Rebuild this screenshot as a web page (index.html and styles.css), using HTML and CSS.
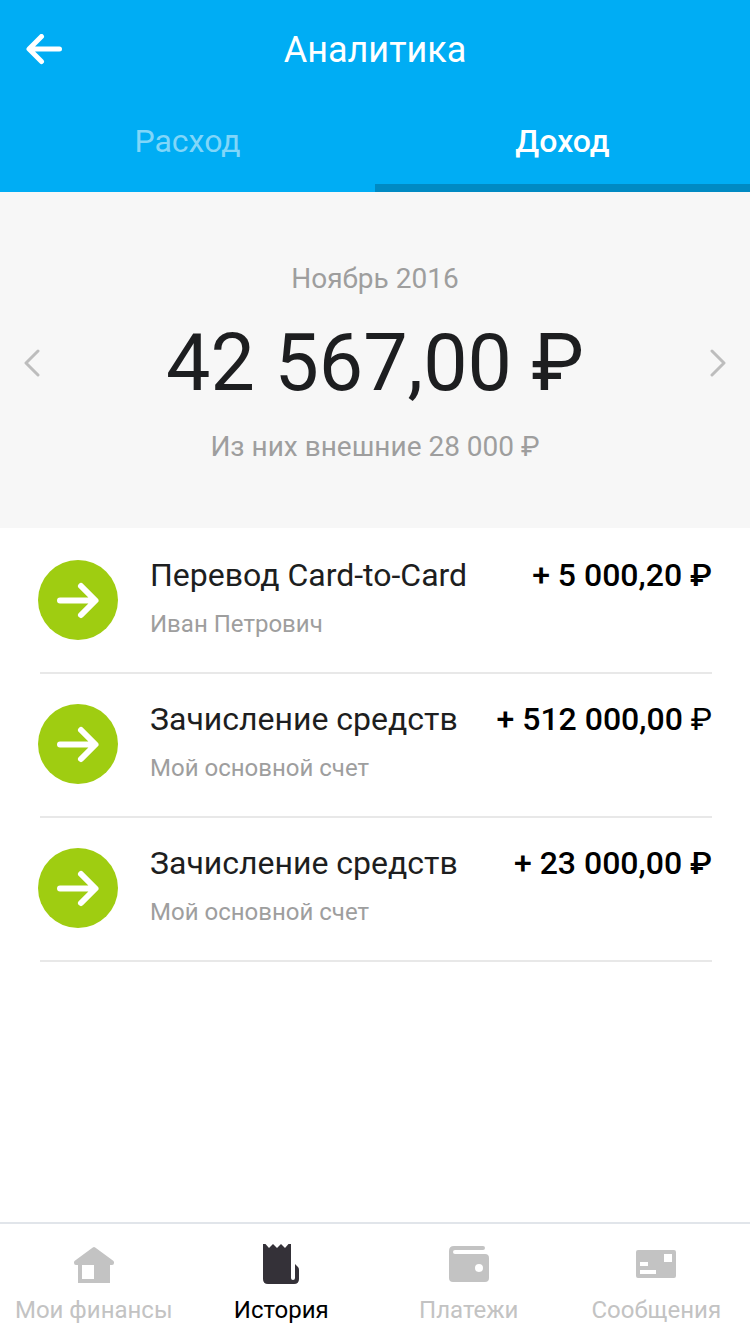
FILE: index.html
```html
<!DOCTYPE html>
<html lang="ru">
<head>
<meta charset="utf-8">
<meta name="viewport" content="width=device-width, initial-scale=1">
<title>Аналитика</title>
<link rel="stylesheet" href="styles.css">
</head>
<body>
<div class="screen">
  <header class="header">
    <div class="title-bar">
      <button class="icon-button" type="button" aria-label="Назад">
        <svg width="36" height="32" viewBox="0 1 36 32" fill="none" stroke="currentColor" stroke-width="5" stroke-linecap="round" stroke-linejoin="round"><path d="M33.5 16H4M15.5 3.500L3 16l12.500 12.500"/></svg>
      </button>
      <h1 class="title">Аналитика</h1>
    </div>
    <div class="tabs" role="tablist">
      <button class="tab" type="button" role="tab" aria-selected="false">Расход</button>
      <button class="tab tab-active" type="button" role="tab" aria-selected="true">Доход</button>
    </div>
  </header>

  <main class="content">
    <section class="summary">
      <button class="icon-button" type="button" aria-label="Предыдущий месяц">
        <svg width="16" height="28" viewBox="0 0 16 28" fill="none" stroke="currentColor" stroke-width="3" stroke-linecap="round" stroke-linejoin="round"><path d="M14 2L2 14l12 12"/></svg>
      </button>
      <div class="summary-text">
        <p class="caption">Ноябрь 2016</p>
        <p class="total">42 567,00 ₽</p>
        <p class="caption">Из них внешние 28 000 ₽</p>
      </div>
      <button class="icon-button" type="button" aria-label="Следующий месяц">
        <svg width="16" height="28" viewBox="0 0 16 28" fill="none" stroke="currentColor" stroke-width="3" stroke-linecap="round" stroke-linejoin="round"><path d="M2 2l12 12L2 26"/></svg>
      </button>
    </section>

    <ul class="operations">
      <li class="operation">
        <svg class="badge" viewBox="0 0 80 80" fill="none" stroke="#fff" stroke-width="6" stroke-linecap="round" stroke-linejoin="round"><circle cx="40" cy="40" r="40" fill="#9fcd11" stroke="none"/><path d="M22 40.500H57M43 26l14.500 14.500L43 55"/></svg>
        <div class="details">
          <div class="line"><span class="name">Перевод Card-to-Card</span><span class="amount">+ 5 000,20 ₽</span></div>
          <p class="note">Иван Петрович</p>
        </div>
      </li>
      <li class="operation">
        <svg class="badge" viewBox="0 0 80 80" fill="none" stroke="#fff" stroke-width="6" stroke-linecap="round" stroke-linejoin="round"><circle cx="40" cy="40" r="40" fill="#9fcd11" stroke="none"/><path d="M22 40.500H57M43 26l14.500 14.500L43 55"/></svg>
        <div class="details">
          <div class="line"><span class="name">Зачисление средств</span><span class="amount">+ 512 000,00 <span class="currency-light">₽</span></span></div>
          <p class="note">Мой основной счет</p>
        </div>
      </li>
      <li class="operation">
        <svg class="badge" viewBox="0 0 80 80" fill="none" stroke="#fff" stroke-width="6" stroke-linecap="round" stroke-linejoin="round"><circle cx="40" cy="40" r="40" fill="#9fcd11" stroke="none"/><path d="M22 40.500H57M43 26l14.500 14.500L43 55"/></svg>
        <div class="details">
          <div class="line"><span class="name">Зачисление средств</span><span class="amount">+ 23 000,00 ₽</span></div>
          <p class="note">Мой основной счет</p>
        </div>
      </li>
    </ul>
  </main>

  <nav class="nav">
    <a class="nav-item" href="#finances">
      <svg class="nav-icon" viewBox="0 0 40 40"><path fill="currentColor" fill-rule="evenodd" d="M18.800 3.500q1.200-.9 2.400 0L39.200 16.800q.8.700.8 1.700v.5q0 2-2 2H36v18H4V21H2q-2 0-2-2v-.5q0-1 .8-1.700zM8 21v14h12V21z"/></svg>
      <span>Мои финансы</span>
    </a>
    <a class="nav-item nav-active" href="#history" aria-current="page">
      <svg class="nav-icon nav-icon-active" viewBox="0 0 40 40"><path fill="currentColor" d="M2 0L4.500 0 8 4l4-4 4 4 4-4 4 4 3.500-4H30v34q0 2 2 2t2-2V20l3 3q1 1 1 3v9q0 5-5 5H7q-5 0-5-5z"/></svg>
      <span>История</span>
    </a>
    <a class="nav-item" href="#payments">
      <svg class="nav-icon" viewBox="0 0 40 40"><path fill="currentColor" fill-rule="evenodd" d="M5 2h29q2 0 2 2t-2 2H6q-2 0-2 2t2 2h30q4 0 4 4v20q0 4-4 4H4q-4 0-4-4V7q0-5 5-5zM30 20a4 4 0 1 0 0 8 4 4 0 0 0 0-8z"/></svg>
      <span>Платежи</span>
    </a>
    <a class="nav-item" href="#messages">
      <svg class="nav-icon" viewBox="0 0 40 40"><path fill="currentColor" fill-rule="evenodd" d="M2 6h36q2 0 2 2v24q0 2-2 2H2q-2 0-2-2V8q0-2 2-2zM28 10v8h8v-8zM4 18v4h8v-4zM4 26v4h16v-4z"/></svg>
      <span>Сообщения</span>
    </a>
  </nav>
</div>
</body>
</html>
```

FILE: styles.css
```css
* {
  box-sizing: border-box;
}

body {
  margin: 0;
  background: #fff;
  color: #1d1e20;
  font-family: Roboto, "Noto Sans", sans-serif;
}

h1, p, ul {
  margin: 0;
  padding: 0;
}

button {
  padding: 0;
  border: 0;
  background: none;
  color: inherit;
  font: inherit;
  cursor: pointer;
}

svg {
  display: block;
}

.screen {
  display: flex;
  flex-direction: column;
  min-height: 100vh;
}

.header {
  background: #00adf4;
  color: #fff;
}

.title-bar {
  display: grid;
  grid-template-columns: 1fr auto 1fr;
  align-items: center;
  padding: 28px 26px 26px;
}

.title-bar .icon-button {
  justify-self: start;
}

.title {
  font-size: 36px;
  font-weight: 400;
  line-height: 44px;
}

.tabs {
  display: grid;
  grid-template-columns: 1fr 1fr;
}

.tab {
  padding: 23px 0;
  border-bottom: 8px solid transparent;
  color: #80d6f9;
  font-size: 32px;
  line-height: 40px;
}

.tab-active {
  border-bottom-color: #008ac3;
  color: #fff;
  font-weight: 500;
}

.content {
  flex: 1;
}

.summary {
  display: flex;
  align-items: center;
  justify-content: space-between;
  padding: 69px 24px 63px;
  background: #f7f7f7;
}

.summary .icon-button {
  color: #bdbdbd;
}

.summary-text {
  display: flex;
  flex-direction: column;
  gap: 18px;
  text-align: center;
}

.caption {
  color: #9e9e9e;
  font-size: 28px;
  line-height: 36px;
}

.total {
  font-size: 79px;
  line-height: 96px;
}

.operations {
  padding: 2px 38px 0;
  list-style: none;
}

.operation {
  display: flex;
  gap: 32px;
  padding: 25px 0 24px;
  background: linear-gradient(#e8e8e8, #e8e8e8) 2px 100% / 100% 2px no-repeat;
}

.badge {
  flex: none;
  width: 80px;
  height: 80px;
  margin: 5px 0 10px;
}

.details {
  flex: 1;
  display: flex;
  flex-direction: column;
  gap: 13px;
}

.line {
  display: flex;
  justify-content: space-between;
  font-size: 32px;
  line-height: 40px;
}

.amount {
  color: #000;
  font-weight: 500;
}

.currency-light {
  font-weight: 400;
}

.note {
  color: #9e9e9e;
  font-size: 24px;
  line-height: 32px;
}

.nav {
  display: grid;
  grid-template-columns: repeat(4, 1fr);
  padding: 20px 0 8px;
  border-top: 2px solid #e1e5ea;
}

.nav-item {
  display: flex;
  flex-direction: column;
  align-items: center;
  gap: 10px;
  color: #c3c3c3;
  font-size: 24px;
  line-height: 32px;
  text-decoration: none;
}

.nav-active {
  color: #000;
}

.nav-icon {
  width: 40px;
  height: 40px;
}

.nav-icon-active {
  color: #343138;
}
```
